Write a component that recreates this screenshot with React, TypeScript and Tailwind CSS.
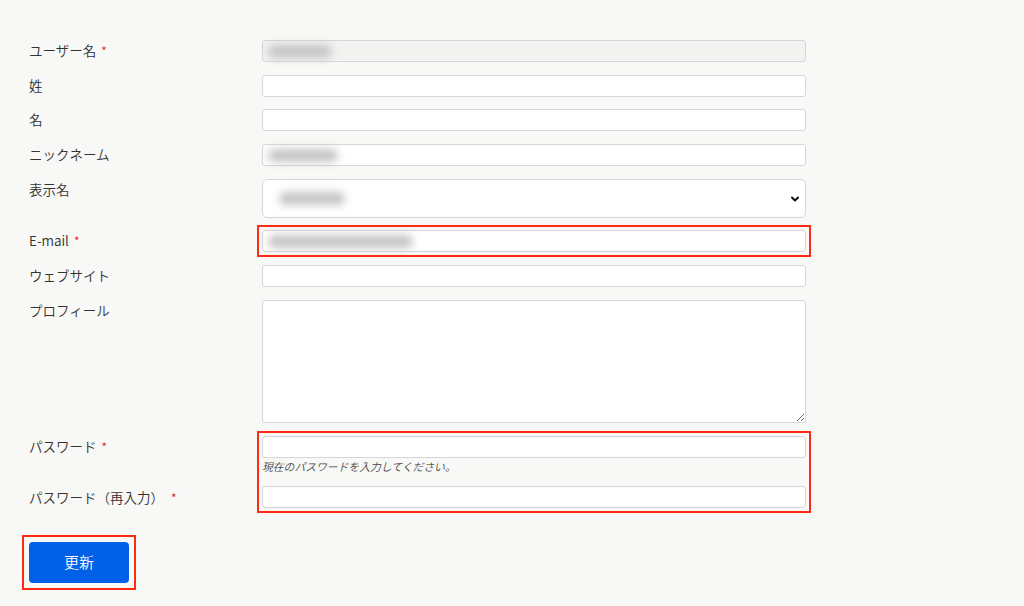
import React from "react";

const font = { fontFamily: '"Noto Sans CJK JP", "Noto Sans", sans-serif' };

function Label({ text, required, gap = "ml-[5px]", className = "" }: { text: string; required?: boolean; gap?: string; className?: string }) {
  return (
    <div className={`h-[22px] overflow-visible text-[13.5px] font-[350] leading-[20px] text-[#333] whitespace-nowrap ${className}`}>
      {text}
      {required && <span className={`${gap} text-[#e0201b] text-[12px] leading-[0px]`}>*</span>}
    </div>
  );
}

function Blur({ w }: { w: number }) {
  return (
    <span
      className="inline-block h-[13px] rounded-full bg-[#c4c4c4] blur-[4px]"
      style={{ width: w }}
    />
  );
}

function Input({ disabled, blur }: { disabled?: boolean; blur?: number }) {
  return (
    <div
      className={`h-[22px] w-[544px] rounded-[3px] border border-[#d6d6d6] flex items-center pl-[5px] ${
        disabled ? "bg-[#f2f2f0]" : "bg-white"
      }`}
    >
      {blur ? <Blur w={blur} /> : null}
    </div>
  );
}

export default function App() {
  return (
    <div className="min-h-[606px] w-[1024px] bg-[#f8f8f6]" style={font}>
      <div className="pl-[29px] pt-[40px]">
        <div className="grid grid-cols-[233px_544px] gap-y-[12.7px] items-start">
          <Label text="ユーザー名" required />
          <Input disabled blur={64} />

          <Label text="姓" />
          <Input />

          <Label text="名" />
          <Input />

          <Label text="ニックネーム" />
          <Input blur={70} />

          <Label text="表示名" />
          <div className="h-[39px] w-[544px] rounded-[5px] border border-[#d6d6d6] bg-white flex items-center justify-between pl-[16px] pr-[5px]">
            <Blur w={66} />
            <svg width="10" height="10" viewBox="0 0 10 10" className="mt-[1px]">
              <path d="M2 3.5 L5 6.5 L8 3.5" fill="none" stroke="#111" strokeWidth="2" strokeLinecap="round" strokeLinejoin="round" />
            </svg>
          </div>

          <Label text="E-mail" required />
          <div className="outline-[2.5px] outline-[#ff2a12] outline-offset-[3px] w-[544px]">
            <Input blur={145} />
          </div>

          <Label text="ウェブサイト" />
          <Input />

          <Label text="プロフィール" />
          <textarea
            className="h-[123px] w-[544px] rounded-[3px] border border-[#d6d6d6] bg-white block outline-none"
            readOnly
          />

          <div className="flex flex-col">
            <Label text="パスワード" required />
            <Label text="パスワード（再入力）" required gap="ml-[7px]" className="mt-[29px]" />
          </div>
          <div className="outline-[2.5px] outline-[#ff2a12] outline-offset-[3.5px] w-[544px] flex flex-col">
            <Input />
            <div className="h-[16.3px] text-[10.8px] font-[350] leading-[16.3px] italic text-[#444] mb-[12.7px] whitespace-nowrap">
              現在のパスワードを入力してください。
            </div>
            <Input />
          </div>
        </div>

        <div className="mt-[33px] inline-block align-top outline-[2.5px] outline-[#ff2a12] outline-offset-[5px]">
          <button className="h-[41px] w-[100px] rounded-[4px] bg-[#0061e8] text-white text-[15px] font-[350] flex items-center justify-center">
            更新
          </button>
        </div>
      </div>
    </div>
  );
}
